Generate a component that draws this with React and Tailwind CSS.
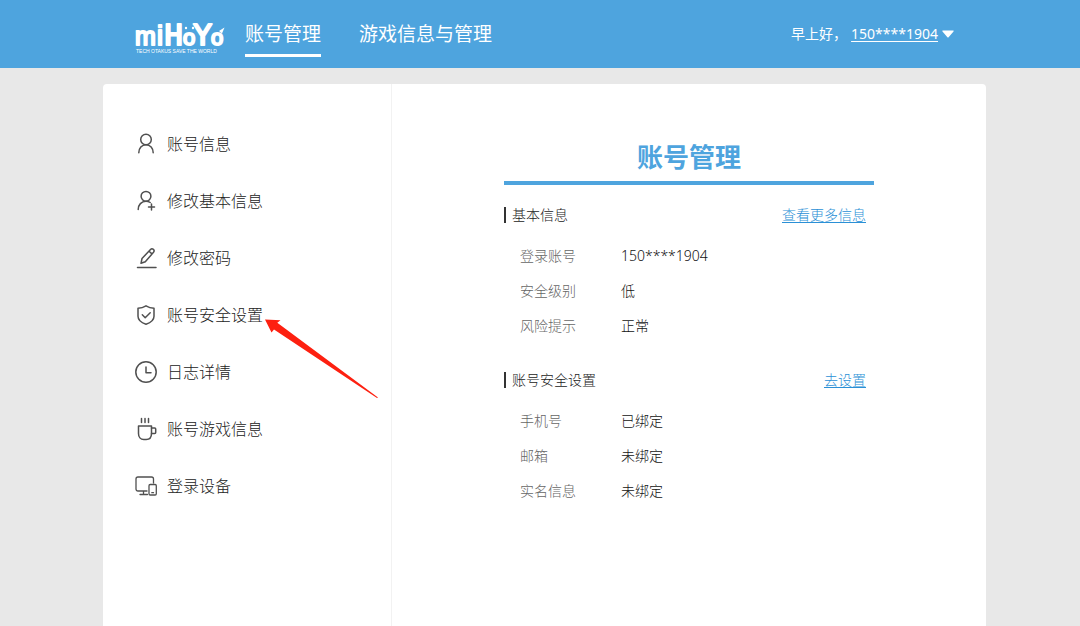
import React from "react";

const iconProps = {
  width: 22,
  height: 24,
  viewBox: "0 0 22 24",
  fill: "none",
  stroke: "currentColor",
  strokeWidth: 1.5,
  strokeLinecap: "round",
  strokeLinejoin: "round",
  "aria-hidden": true,
  className: "shrink-0 text-[#505050]",
};

const UserIcon = () => (
  <svg {...iconProps}>
    <circle cx="11" cy="7.500" r="5.300" />
    <path d="M3.800 20.800c0-4.500 3-8 7.200-8s7.200 3.500 7.200 8" />
  </svg>
);

const UserPlusIcon = () => (
  <svg {...iconProps}>
    <circle cx="11" cy="7.300" r="4.900" />
    <path d="M3.200 20.500c0-4.600 3.200-8.300 7.800-8.300 1.600 0 3 .5 4.200 1.300M16.500 15v6M13.500 18h6" />
  </svg>
);

const PenIcon = () => (
  <svg {...iconProps}>
    <path d="M2.500 21.500h18.500M6 17.300l1-4.800 8.500-9c.9-.9 2-.9 2.900-.1.900.8.900 1.900.1 2.900L10.300 15.800zM14 5.200l3 2.700" />
  </svg>
);

const ShieldIcon = () => (
  <svg {...iconProps}>
    <path d="M11 2.800c2.300 1.400 5 2.300 8 2.500v8c0 3.600-3.300 6.400-8 8-4.700-1.600-8-4.400-8-8v-8c3-.2 5.700-1.100 8-2.500z" />
    <path d="M7.300 11.800l2.900 2.900 5-5" />
  </svg>
);

const ClockIcon = () => (
  <svg {...iconProps}>
    <circle cx="11" cy="12" r="10.200" />
    <path d="M11 7v5.800h5" />
  </svg>
);

const CupIcon = () => (
  <svg {...iconProps}>
    <path d="M6.500 1.500v4M10 1.500v4M13.500 1.500v4" />
    <path d="M3.500 9h13v7.500c0 3.500-2 6-5.300 6H8.800c-3.300 0-5.300-2.500-5.300-6z" />
    <path d="M16.500 11h3.200c.6 0 1 .4 1 1v3.500c0 .6-.4 1-1 1h-3.200" />
  </svg>
);

const DevicesIcon = () => (
  <svg {...iconProps} strokeWidth="1.300">
    <path d="M12 17H3c-1.200 0-2-.8-2-2V5c0-1.200.8-2 2-2h13.500c1.200 0 2 .8 2 2v4M8.500 17v3.500M5 20.500h7.500" />
    <rect x="14" y="10.500" width="7.300" height="10.500" rx="1.200" />
    <path d="M16.800 18.700h1.700" />
  </svg>
);

const Arrow = () => (
  <svg
    className="pointer-events-none absolute left-[130px] top-[33px] z-10"
    width="114"
    height="80"
    viewBox="0 0 114 80"
    aria-hidden="true"
  >
    <path d="M0 .5L15.500 1.200 12.300 3.800 113 78.500 112 79 9 10.500 6.500 13.500z" fill="#fd2010" />
  </svg>
);

const Logo = () => (
  <svg width="90" height="36" viewBox="0 0 90 36" role="img" aria-label="miHoYo" className="shrink-0 overflow-visible">
    <text
      y="25"
      fill="#fff"
      stroke="#fff"
      strokeWidth="2"
      strokeLinejoin="round"
      fontFamily="'Liberation Sans', sans-serif"
    >
      <tspan x="0" fontSize="25">m</tspan>
      <tspan x="22" fontSize="27">i</tspan>
      <tspan x="29" fontSize="32" fontFamily="'Liberation Mono', monospace">H</tspan>
      <tspan x="48" fontSize="22">o</tspan>
      <tspan x="58" fontSize="32" fontFamily="'Liberation Mono', monospace">Y</tspan>
      <tspan x="76" fontSize="22">o</tspan>
    </text>
    <g fill="#fff">
      <circle cx="51" cy="8" r="1.200" />
      <circle cx="58" cy="8" r="1.200" />
      <path d="M84 11l5.500-3.500-2.500 6z" />
    </g>
    <text x="1" y="33" fontSize="5" fill="#fff" fontFamily="'Liberation Sans', sans-serif">
      TECH OTAKUS SAVE THE WORLD
    </text>
  </svg>
);

const menu = [
  { label: "账号信息", Icon: UserIcon },
  { label: "修改基本信息", Icon: UserPlusIcon },
  { label: "修改密码", Icon: PenIcon },
  { label: "账号安全设置", Icon: ShieldIcon, marked: true },
  { label: "日志详情", Icon: ClockIcon },
  { label: "账号游戏信息", Icon: CupIcon },
  { label: "登录设备", Icon: DevicesIcon },
];

const sections = [
  {
    title: "基本信息",
    link: "查看更多信息",
    rows: [
      ["登录账号", "150****1904"],
      ["安全级别", "低"],
      ["风险提示", "正常"],
    ],
  },
  {
    title: "账号安全设置",
    link: "去设置",
    rows: [
      ["手机号", "已绑定"],
      ["邮箱", "未绑定"],
      ["实名信息", "未绑定"],
    ],
  },
];

function Header() {
  return (
    <header className="bg-[#4ea4de] pl-[9px] text-white">
      <div className="mx-auto flex h-[68px] max-w-[883px] items-start justify-between px-8 pt-5">
        <div className="flex items-start">
          <a href="#home">
            <Logo />
          </a>
          <nav className="ml-5 flex gap-[38px] text-[19px] leading-7">
            <a href="#account" aria-current="page" className="border-b-3 border-white pb-[6px]">
              账号管理
            </a>
            <a href="#games">游戏信息与管理</a>
          </nav>
        </div>
        <div className="flex items-center text-sm leading-7">
          <span>早上好，</span>
          <button type="button" className="ml-1 flex items-center gap-1">
            <span className="underline underline-offset-2">150****1904</span>
            <svg width="12" height="8" viewBox="0 0 12 8" aria-hidden="true">
              <path d="M1 .5h10c.6 0 .9.6.5 1L6.600 7.200c-.3.400-.9.400-1.200 0L.500 1.500C.1 1.100.400.500 1 .5z" fill="#fff" />
            </svg>
          </button>
        </div>
      </div>
    </header>
  );
}

function Section({ title, link, rows }) {
  return (
    <section>
      <div className="flex h-[46px] items-center justify-between pr-2">
        <h2 className="flex items-center gap-[6px] text-[#222]">
          <span className="h-4 w-[2px] bg-[#333]" />
          {title}
        </h2>
        <a href="#more" className="text-[#2b90d6] underline underline-offset-2">
          {link}
        </a>
      </div>
      <dl className="pl-4">
        {rows.map(([name, value]) => (
          <div key={name} className="flex h-[35px] items-center">
            <dt className="w-[101px] text-[#666]">{name}</dt>
            <dd className="text-[#111]">{value}</dd>
          </div>
        ))}
      </dl>
    </section>
  );
}

export default function App() {
  return (
    <div className="flex min-h-screen flex-col bg-[#e8e8e8] font-['Noto_Sans','Noto_Sans_CJK_SC',sans-serif]">
      <Header />
      <div className="flex flex-1 pl-[9px] pt-4">
        <div className="mx-auto flex w-full max-w-[883px] rounded-t-sm bg-white">
          <aside className="w-[289px] shrink-0 border-r border-[#f2f2f2] pl-8 pt-[31px]">
            <ul>
              {menu.map(({ label, Icon, marked }) => (
                <li key={label} className="relative">
                  <a href="#menu" className="flex h-[57px] items-center gap-[10px] text-base font-light text-[#222]">
                    <Icon />
                    {label}
                  </a>
                  {marked && <Arrow />}
                </li>
              ))}
            </ul>
          </aside>
          <main className="flex-1 pt-[55px]">
            <div className="mx-auto max-w-[370px]">
              <h1 className="mb-[7px] border-b-4 border-[#4ea4de] pb-[5px] text-center text-[26px] font-bold leading-[37px] text-[#4ea4de]">
                账号管理
              </h1>
              <div className="flex flex-col gap-[14px] text-sm font-light">
                {sections.map((section) => (
                  <Section key={section.title} {...section} />
                ))}
              </div>
            </div>
          </main>
        </div>
      </div>
    </div>
  );
}
